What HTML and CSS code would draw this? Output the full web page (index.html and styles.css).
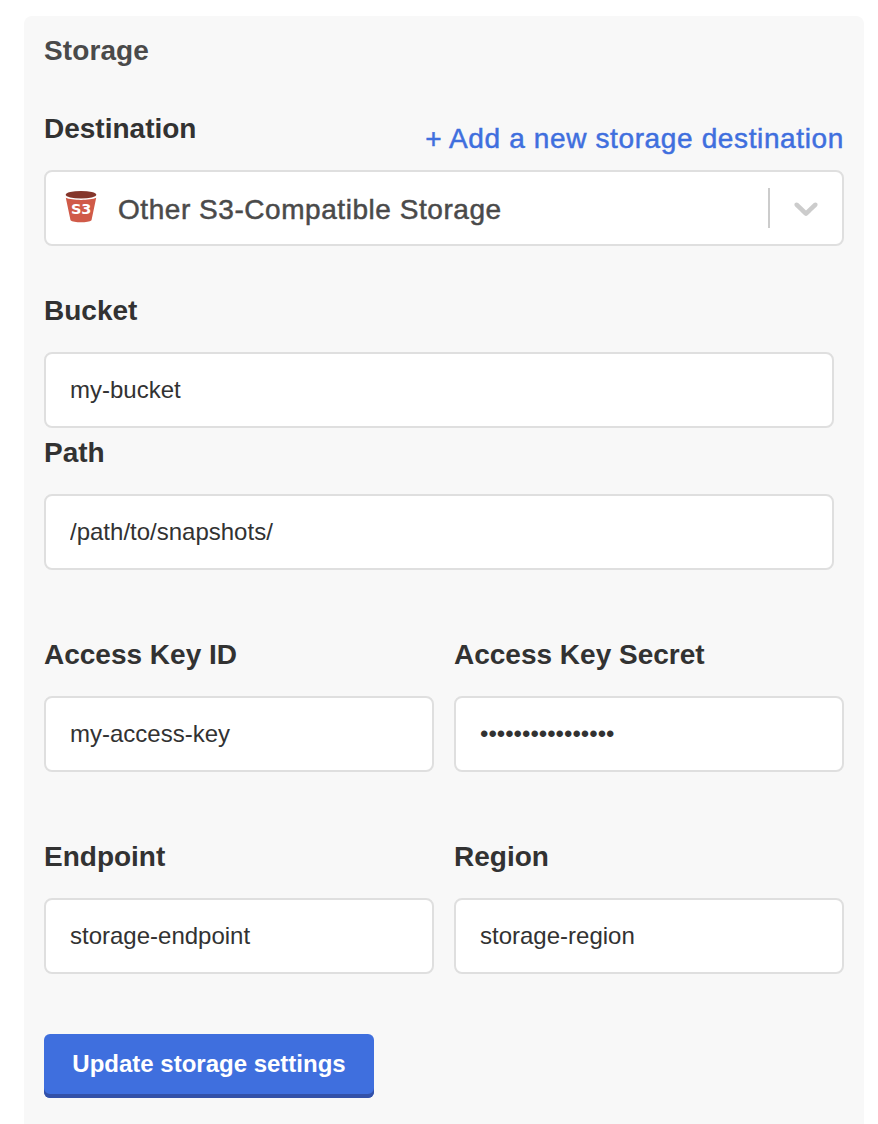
FILE: index.html
```html
<!DOCTYPE html>
<html lang="en">
<head>
<meta charset="utf-8">
<title>Storage</title>
<link rel="stylesheet" href="styles.css">
</head>
<body>
<form class="panel">
  <h1 class="title">Storage</h1>
  <div class="destination-head">
    <span class="label">Destination</span>
    <a class="add-link">+ Add a new storage destination</a>
  </div>
  <div class="select">
    <svg class="bucket" width="34" height="36" viewBox="0 0 34 36">
      <path d="M1.800 7.800C8 10.600 26 10.600 32.200 7.800L27.500 30.300C24.500 33 9.500 33 6.500 30.300Z" fill="#d05a48"/>
      <ellipse cx="17" cy="4.800" rx="15.300" ry="3.800" fill="#84352a"/>
      <text class="bucket-text" x="17.200" y="24.400" text-anchor="middle">S3</text>
    </svg>
    <span class="select-value">Other S3-Compatible Storage</span>
    <span class="divider"></span>
    <svg class="chevron" width="40" height="40" viewBox="0 0 20 20">
      <path fill="#ccc" d="M4.516 7.548c0.436-0.446 1.043-0.481 1.576 0l3.908 3.747 3.908-3.747c0.533-0.481 1.141-0.446 1.574 0 0.436 0.445 0.408 1.197 0 1.615-0.406 0.418-4.695 4.502-4.695 4.502-0.217 0.223-0.502 0.335-0.787 0.335s-0.570-0.112-0.789-0.335c0 0-4.287-4.084-4.695-4.502s-0.436-1.170 0-1.615z"/>
    </svg>
  </div>
  <div class="stack">
    <label class="field"><span class="label">Bucket</span><input class="input" type="text" value="my-bucket"></label>
    <label class="field"><span class="label">Path</span><input class="input" type="text" value="/path/to/snapshots/"></label>
  </div>
  <div class="pair">
    <label class="field"><span class="label">Access Key ID</span><input class="input" type="text" value="my-access-key"></label>
    <label class="field"><span class="label">Access Key Secret</span><input class="input" type="password" value="my-access-secret"></label>
  </div>
  <div class="pair">
    <label class="field"><span class="label">Endpoint</span><input class="input" type="text" value="storage-endpoint"></label>
    <label class="field"><span class="label">Region</span><input class="input" type="text" value="storage-region"></label>
  </div>
  <button class="button" type="button">Update storage settings</button>
</form>
</body>
</html>
```
FILE: styles.css
```css
* { box-sizing: border-box; }
html { height: 100%; overflow: hidden; }
body {
  margin: 0;
  height: 100%;
  padding: 16px 14px 0 24px;
  background: #fff;
  font-family: "Liberation Sans", Arial, sans-serif;
  overflow: hidden;
}
.panel {
  height: 1140px;
  padding: 19px 20px;
  background: #f8f8f8;
  border-radius: 8px;
}
.title, .label {
  display: block;
  margin: 0;
  font-size: 28px;
  line-height: 32px;
  font-weight: 700;
  color: #323232;
  white-space: nowrap;
}
.title { color: #4a4a4a; letter-spacing: 0.1px; }
.destination-head {
  display: flex;
  justify-content: space-between;
  align-items: flex-start;
  height: 57px;
  margin-top: 46px;
}
.add-link {
  margin-top: 10px;
  font-size: 28px;
  line-height: 32px;
  letter-spacing: 0.63px;
  color: #3f6fde;
  -webkit-text-stroke: 0.5px #3f6fde;
  white-space: nowrap;
}
.select {
  display: flex;
  align-items: center;
  height: 76px;
  padding: 0 16px 0 18px;
  background: #fff;
  border: 2px solid #dfdfdf;
  border-radius: 8px;
}
.bucket { flex: none; }
.bucket-text { font: 700 14.5px "DejaVu Sans", sans-serif; fill: #fff; }
.select-value {
  flex: 1;
  margin-left: 20px;
  padding-top: 4px;
  font-size: 28px;
  line-height: 32px;
  letter-spacing: 0.55px;
  color: #4a4a4a;
  -webkit-text-stroke: 0.5px #4a4a4a;
  white-space: nowrap;
}
.divider { width: 2px; height: 40px; margin-right: 16px; background: #ccc; }
.chevron { flex: none; }
.stack {
  display: grid;
  gap: 9px;
  margin: 49px 10px 0 0;
}
.field { display: block; min-width: 0; }
.input {
  display: block;
  width: 100%;
  height: 76px;
  margin-top: 25px;
  padding: 0 24px;
  border: 2px solid #dfdfdf;
  border-radius: 8px;
  background: #fff;
  color: #323232;
  font: 24px "Liberation Sans", Arial, sans-serif;
}
.pair {
  display: grid;
  grid-template-columns: 1fr 1fr;
  gap: 20px;
  margin-top: 69px;
}
.button {
  display: block;
  width: 330px;
  height: 64px;
  margin-top: 60px;
  padding: 0 0 4px;
  border: 0;
  border-radius: 6px;
  background: #3f6fde;
  box-shadow: inset 0 -4px 0 #3351a8;
  color: #fff;
  font: 700 24px "Liberation Sans", Arial, sans-serif;
}
```
